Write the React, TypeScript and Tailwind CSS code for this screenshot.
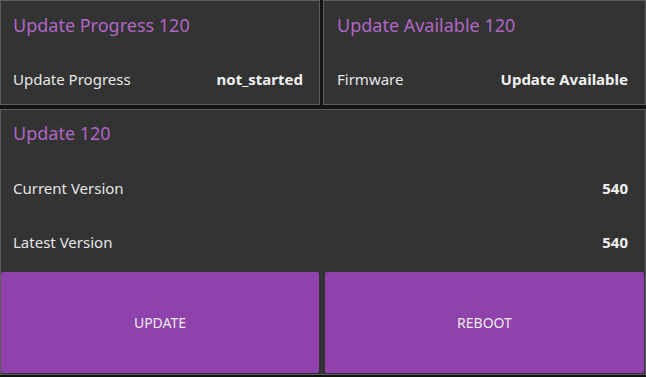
export default function App() {
  const font = { fontFamily: '"Noto Sans", "Open Sans", sans-serif' };
  return (
    <div className="w-[646px] h-[377px] bg-[#141414] flex flex-col" style={font}>
      <div className="flex gap-[3px] h-[105px]">
        <div className="w-[320px] h-full bg-[#333333] border border-[#5c5c5c] flex flex-col">
          <div className="h-[48px] flex items-center pl-[12px] text-[18px] text-[#b066c6]">Update Progress 120</div>
          <div className="mt-[6px] h-[48px] flex items-center justify-between pl-[12px] pr-[16px] text-[15px]">
            <span className="text-[#e6e6e6]">Update Progress</span>
            <span className="font-bold text-[#f0f0f0]">not_started</span>
          </div>
        </div>
        <div className="flex-1 h-full bg-[#333333] border border-[#5c5c5c] flex flex-col">
          <div className="h-[48px] flex items-center pl-[13px] text-[18px] text-[#b066c6]">Update Available 120</div>
          <div className="mt-[6px] h-[48px] flex items-center justify-between pl-[13px] pr-[17px] text-[15px]">
            <span className="text-[#e6e6e6]">Firmware</span>
            <span className="font-bold text-[#f0f0f0]">Update Available</span>
          </div>
        </div>
      </div>
      <div className="mt-[4px] h-[266px] bg-[#333333] border border-[#5c5c5c] flex flex-col">
        <div className="h-[46px] flex items-center pl-[12px] text-[18px] text-[#b066c6]">Update 120</div>
        <div className="mt-[5px] h-[54px] flex items-center justify-between pl-[12px] pr-[17px] text-[15px]">
          <span className="text-[#e6e6e6]">Current Version</span>
          <span className="font-bold text-[#f0f0f0]">540</span>
        </div>
        <div className="h-[54px] flex items-center justify-between pl-[12px] pr-[17px] text-[15px]">
          <span className="text-[#e6e6e6]">Latest Version</span>
          <span className="font-bold text-[#f0f0f0]">540</span>
        </div>
        <div className="mt-[3px] flex-1 flex gap-[6px] pb-[1px] pr-[1px]">
          <button className="w-[318px] h-full bg-[#8f42ab] rounded-[2px] text-[14px] text-[#ececec]">UPDATE</button>
          <button className="flex-1 h-full bg-[#8f42ab] rounded-[2px] text-[14px] text-[#ececec]">REBOOT</button>
        </div>
      </div>
    </div>
  );
}
